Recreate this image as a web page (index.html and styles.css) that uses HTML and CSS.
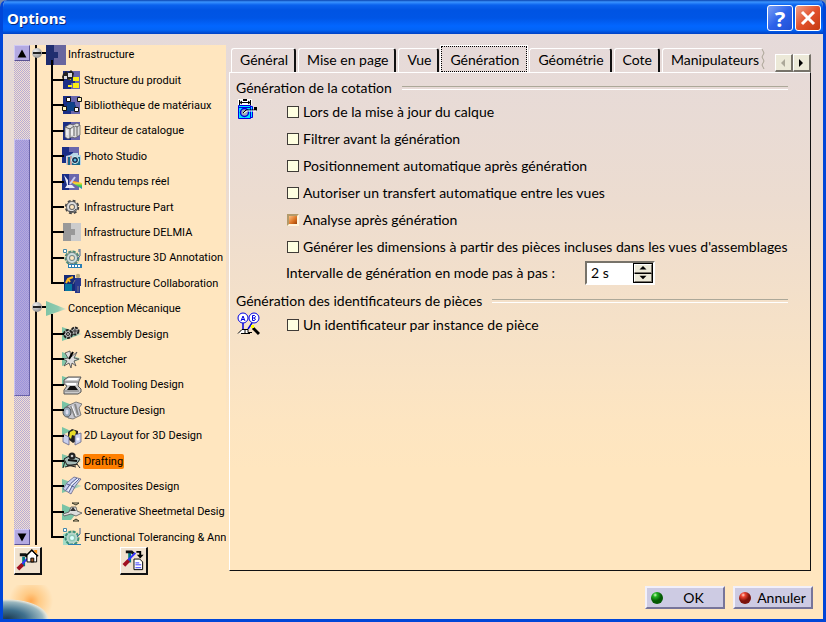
FILE: index.html
```html
<!DOCTYPE html>
<html lang="fr">
<head>
<meta charset="utf-8">
<title>Options</title>
<link rel="stylesheet" href="styles.css">
</head>
<body>
<svg class="defs" aria-hidden="true">
  <defs>
    <radialGradient id="ball-green" cx="35%" cy="25%"><stop offset="0" stop-color="#d6ffc4"/><stop offset=".35" stop-color="#22b322"/><stop offset="1" stop-color="#045a04"/></radialGradient>
    <radialGradient id="ball-red" cx="35%" cy="25%"><stop offset="0" stop-color="#ffd9cc"/><stop offset=".35" stop-color="#ee4433"/><stop offset="1" stop-color="#7c120c"/></radialGradient>
    <linearGradient id="cone" x1="0" x2="1"><stop offset="0" stop-color="#7fc4a6"/><stop offset=".6" stop-color="#8ecab0"/><stop offset="1" stop-color="#d9e2c4"/></linearGradient>
    <linearGradient id="spectrum" x1="0" y1="0" x2="0" y2="1"><stop offset="0" stop-color="#e33"/><stop offset=".35" stop-color="#fd3"/><stop offset=".65" stop-color="#3c5"/><stop offset="1" stop-color="#27e"/></linearGradient>
    <symbol id="base" viewBox="0 0 20 20"><path fill="#6a67ad" d="M1 1h17v18H1z"/><path fill="#1a2e86" d="M1 1h8v6h4v6H9v6H1z"/></symbol>
    <symbol id="wedge" viewBox="0 0 20 20"><path fill="url(#cone)" d="M0 3l20 7L0 17z"/></symbol>
    <symbol id="gear" viewBox="0 0 20 20"><circle cx="10" cy="10" r="6" fill="none" stroke="#444" stroke-width="2.500" stroke-dasharray="2.700 2"/><circle cx="10" cy="10" r="4" fill="none" stroke="#666" stroke-width="4"/><circle cx="10" cy="10" r="4" fill="none" stroke="#ddd" stroke-width="2"/><path d="M7 14a5 5 0 0 0 7-2" fill="none" stroke="#444"/></symbol>
  </defs>
</svg>

<main class="window">
  <header class="titlebar">
    <h1>Options</h1>
    <button class="caption help" type="button" aria-label="Aide">?</button>
    <button class="caption close" type="button" aria-label="Fermer"><svg viewBox="0 0 22 22"><path d="M5 5l12 12M17 5L5 17" stroke="#fff" stroke-width="3"/></svg></button>
  </header>

  <div class="content">
    <aside class="sidebar">
      <div class="treebox">
        <div class="scrollbar">
          <button class="arrow" type="button" aria-label="Monter"><svg viewBox="0 0 16 16"><path d="M8 4l5 9H3z"/></svg></button>
          <div class="track"><div class="thumb"></div></div>
          <button class="arrow" type="button" aria-label="Descendre"><svg viewBox="0 0 16 16"><path d="M8 13L3 4h10z"/></svg></button>
        </div>
        <div class="viewport">
        <ul class="tree">
          <li class="group">
            <a class="root" href="#"><i class="knob"></i><svg viewBox="0 0 20 20"><path fill="#68669f" d="M0 0h20v20H0z"/><path fill="#202d6f" d="M0 0h8v7h4v6H8v7H0z"/></svg><span>Infrastructure</span></a>
            <ul class="children">
              <li><a href="#"><svg viewBox="0 0 20 20"><use href="#base"/><path fill="#f8ee14" d="M11 7h6v4h-6zM11 13h6v5h-6zM6 9h3v1H6zM6 15h4v2H6z"/><path fill="#222" d="M1 4l3-3 2 2 3-3 3 3-1 5-4 2-3-1-3 1-1-3z"/><path fill="#ddd" d="M2 6h3v3H2zM6 3h4v4H6z"/></svg><span>Structure du produit</span></a></li>
              <li><a href="#"><svg viewBox="0 0 20 20"><use href="#base"/><path fill="#0d4388" d="M5 8l6-1 3 4-2 5H5z"/><g stroke="#111" fill="#fff"><path d="M4.500 2.500h4v4h-4z"/><path fill="#fff6bd" d="M15.500 2.500h4v4h-4z"/><path fill="#fff6bd" d="M.5 11.500h4v4h-4z"/><path d="M12.500 12.500h4v4h-4z"/></g></svg><span>Bibliothèque de matériaux</span></a></li>
              <li><a href="#"><svg viewBox="0 0 20 20"><use href="#base"/><path fill="#ddd" stroke="#555" stroke-width=".7" d="M3 6l5-3 3 1 4-2 3 2v10l-5 3-3-1-4 2-3-2z"/><path d="M8 7v10M3 6l5 2 4-3M12 5v10M13 5l2 1 3-2M15 6v9" stroke="#666" fill="none"/><path d="M5 9v5M10 8v6" stroke="#fff"/></svg><span>Editeur de catalogue</span></a></li>
              <li><a href="#"><svg viewBox="0 0 20 20"><path fill="#6a67ad" d="M0 1h17v15H0z"/><path fill="#1a2e86" d="M0 1h7v5h4v6H7v5H0z"/><path fill="#b9d6e6" d="M4 10l4-1 3-2h5v2h3v10H4z"/><path fill="#17688a" d="M6 11h12v8H6z"/><path fill="#c99" d="M5 11h1v8H5zM8 10h2v9H8z"/><circle cx="13" cy="14" r="3.500" fill="#124" stroke="#dff"/><circle cx="13" cy="14" r="1.500" fill="#58b9dd"/></svg><span>Photo Studio</span></a></li>
              <li><a href="#"><svg viewBox="0 0 20 20"><path fill="#6a67ad" d="M0 2h17v16H0z"/><path fill="#1a2e86" d="M0 2h7v16H0z"/><path fill="url(#spectrum)" d="M8 8l12 3v6L9 10z"/><path fill="#e8eafa" d="M2 3l4 5v5h4l3 3H3l2-3z"/><path d="M8 12l5-7" stroke="#cce" stroke-width="2"/></svg><span>Rendu temps réel</span></a></li>
              <li><a href="#"><svg viewBox="0 0 20 20"><use href="#gear"/></svg><span>Infrastructure Part</span></a></li>
              <li><a href="#"><svg viewBox="0 0 20 20"><path fill="#ccc" d="M1 1h18v18H1z"/><path fill="#999" d="M1 1h8v6h4v6H9v6H1z"/></svg><span>Infrastructure DELMIA</span></a></li>
              <li><a href="#"><svg viewBox="0 0 20 20"><circle cx="10" cy="10" r="6" fill="none" stroke="#4d8c78" stroke-width="3" stroke-dasharray="3 1"/><circle cx="10" cy="10" r="4" fill="none" stroke="#788" stroke-width="4"/><circle cx="10" cy="10" r="4" fill="none" stroke="#cdd" stroke-width="2"/><path d="M1.500 1.500h3v3h-3z" fill="#fff" stroke="#48a"/><path d="M18 1v7l-3 3M17 1v3" stroke="#469" fill="none"/><path fill="#2b7fb4" d="M6 16h14v4H6z"/><path d="M7 18h12" stroke="#fff" stroke-width="2" stroke-dasharray="2 1"/></svg><span>Infrastructure 3D Annotation</span></a></li>
              <li><a href="#"><svg viewBox="0 0 20 20"><path fill="#152b78" d="M2 2h11v16H2z"/><path fill="#0878a0" d="M3 11h7v7H3z"/><path d="M4 10l2-4 5-2M6 6l2 3" stroke="#fb2" stroke-width="2" fill="none"/><circle cx="16" cy="3" r="2.200" fill="#b8a87a"/><path fill="#29398e" d="M13 5h6v8h-1v7h-5z"/><path d="M16 13v6M13 7l-2 4" stroke="#778"/></svg><span>Infrastructure Collaboration</span></a></li>
            </ul>
          </li>
          <li class="group">
            <a class="root" href="#"><i class="knob"></i><svg viewBox="0 0 20 20"><path fill="url(#cone)" d="M0 2l20 8L0 17z"/></svg><span>Conception Mécanique</span></a>
            <ul class="children">
              <li><a href="#"><svg viewBox="0 0 20 20"><use href="#wedge"/><g fill="#bbb" stroke="#222" stroke-width="2"><circle cx="6" cy="10" r="4" stroke-dasharray="3 1"/><circle cx="13" cy="7" r="3.500" stroke-dasharray="3 1"/><circle cx="6" cy="10" r="1.500" stroke-width="1"/><circle cx="13" cy="7" r="1.200" stroke-width="1"/></g></svg><span>Assembly Design</span></a></li>
              <li><a href="#"><svg viewBox="0 0 20 20"><use href="#wedge"/><path d="M8 2l1 6 6-5-3 6 5 1-5 2 2 5-4-3-1 5-2-5-5 3 3-5-4-2 5-1-3-5z" fill="#ddd" stroke="#444" stroke-width=".8"/><path d="M7 10l4-7" stroke="#000" stroke-width="2"/></svg><span>Sketcher</span></a></li>
              <li><a href="#"><svg viewBox="0 0 20 20"><path fill="#79c4a6" d="M0 1l12 4-12 5z"/><path fill="#ccc" stroke="#555" d="M2 5l4-3h13l-2 4-1 5 3 3v3l-3 2H2v-4l3-4-3-2z"/><path fill="#fff" d="M4 5l3-2h10l-2 2zM4 8h10v2H5z"/><path fill="#111" d="M5 15l3-4h5l3 4z"/><path d="M2 7h14M3 16h14" stroke="#777"/></svg><span>Mold Tooling Design</span></a></li>
              <li><a href="#"><svg viewBox="0 0 20 20"><path fill="#79c4a6" d="M0 1l10 4-10 5z"/><path fill="#c7c7cf" stroke="#666" stroke-width=".8" d="M5 6l9-4 6 2-3 4 2 7-8 4-5-1z"/><path d="M9 6l4 11M13 4l3 11" stroke="#888" stroke-width="2"/><path d="M10 6l4 10" stroke="#fff"/><ellipse cx="5" cy="12" rx="4" ry="5" fill="#9ab" stroke="#555"/><ellipse cx="5" cy="12" rx="1.500" ry="2.500" fill="#dde"/></svg><span>Structure Design</span></a></li>
              <li><a href="#"><svg viewBox="0 0 20 20"><path fill="#79c4a6" d="M0 1l9 4-9 4z"/><path fill="#222" d="M6 6l4-3 6 2v9l-5 3-5-4z"/><path fill="#e7dc28" d="M8 6l4-2 2 2-1 4-3-1-1 4-2-2z"/><path fill="#c9d0ee" stroke="#668" stroke-width=".8" d="M1 8l6 3v8l-6-3zM13 9l6-2v9l-6 3z"/><circle cx="16" cy="13" r="1.500" fill="#fff"/></svg><span>2D Layout for 3D Design</span></a></li>
              <li><a href="#" class="selected"><svg viewBox="0 0 20 20"><use href="#wedge"/><path fill="#a6bbb7" stroke="#222" d="M2 8l7-4 9 4-4 6H5z"/><path d="M3 10L1 17M15 13l3 4M5 14l9 2M3 16l12-3" stroke="#222"/><circle cx="10" cy="5" r="3.500" fill="#222"/><circle cx="10" cy="5" r="1.300" fill="#ccc"/><path d="M6 9l9 1" stroke="#111" stroke-width="2"/></svg><span>Drafting</span></a></li>
              <li><a href="#"><svg viewBox="0 0 20 20"><use href="#wedge"/><path fill="#c9cff0" stroke="#668" stroke-width=".8" d="M1 13Q4 6 12 1l7 2Q13 9 9 18z"/><path d="M4 14Q8 7 15 2M7 16Q9 9 17 3M5 8l7 3" stroke="#55608f" fill="none"/><path d="M6 15Q8 8 16 3" stroke="#fff" fill="none"/></svg><span>Composites Design</span></a></li>
              <li><a href="#"><svg viewBox="0 0 20 20"><path fill="#79c4a6" d="M0 2l16 7-7 9H0z"/><path fill="#ddd" stroke="#555" stroke-width=".8" d="M1 12l6-2 2-5h5l1 4 5 2-6 3-5-2-7 2z"/><path fill="#333" d="M8 9l3-4 3 4z"/><path fill="none" stroke="#332" d="M10 1h7l-3 2zM11 19l3-2 3 2z"/></svg><span>Generative Sheetmetal Desig</span></a></li>
              <li><a href="#"><svg viewBox="0 0 20 20"><path fill="#a5dcc8" d="M1 7l8-3v15H1z"/><circle cx="10" cy="11" r="6" fill="none" stroke="#3e927b" stroke-width="3" stroke-dasharray="3 1"/><circle cx="10" cy="11" r="4.500" fill="#8dc8b5" stroke="#b6d6cc" stroke-width="2"/><circle cx="10" cy="11" r="2" fill="#dff"/><path d="M1.500 1.500h3v3h-3z" fill="#fff" stroke="#48a"/><path d="M18 1v6l-3 3" stroke="#469" fill="none"/><path fill="#2b7fb4" d="M6 17h13v2H6z"/></svg><span>Functional Tolerancing &amp; Ann</span></a></li>
            </ul>
          </li>
        </ul>
        </div>
      </div>
      <div class="tools">
        <button type="button" aria-label="Valeurs par défaut"><svg viewBox="0 0 26 26"><path d="M9 9v10" stroke="#078" stroke-width="3"/><path d="M5 7h6l2 2" stroke="#111" stroke-width="3" fill="none"/><path d="M7 17l8-8" stroke="#33f" stroke-width="2"/><path d="M3 22l5-5" stroke="#a01020" stroke-width="4"/><path fill="#fff" stroke="#000" d="M12.500 14.500v-7l5-5 5 5v7z"/><path d="M11 8.500l6.500-6.500L24 8.500" stroke="#000" fill="none" stroke-width="1.500"/><path fill="#f7941d" d="M20 2h3v4l-3-2z"/><path fill="#a55a26" stroke="#000" d="M16.500 10.500h3v4h-3z"/></svg></button>
        <button type="button" aria-label="Lister les paramètres"><svg viewBox="0 0 26 26"><path d="M9 5v10" stroke="#078" stroke-width="3"/><path d="M5 4h6l2 2" stroke="#111" stroke-width="3" fill="none"/><path d="M7 13l8-8" stroke="#33f" stroke-width="2"/><path d="M3 18l5-5" stroke="#a01020" stroke-width="4"/><path fill="#fff" stroke="#000" d="M13.500 11.500h6l3 3v8h-9z"/><path d="M15 15.500h4M15 17.500h6M15 20.500h6" stroke="#33f"/><path d="M16 4h4v4" stroke="#000" stroke-width="2" fill="none"/><path d="M16.500 7h7L20 11z"/></svg></button>
      </div>
    </aside>

    <section class="pane">
      <nav class="tabs">
        <button type="button">Général</button>
        <button type="button">Mise en page</button>
        <button type="button">Vue</button>
        <button type="button" class="active">Génération</button>
        <button type="button">Géométrie</button>
        <button type="button">Cote</button>
        <button type="button" class="cut">Manipulateurs<svg viewBox="0 0 4 22"><path d="M1 0l2 4-2 4 2 4-2 4 2 4" stroke="#a9a394" fill="none"/></svg></button>
        <span class="pager">
          <button type="button" disabled aria-label="Onglets précédents"><svg viewBox="0 0 14 14"><path fill="#aca899" d="M9 3v8L5 7z"/></svg></button>
          <button type="button" aria-label="Onglets suivants"><svg viewBox="0 0 14 14"><path d="M5 3v8l4-4z"/></svg></button>
        </span>
      </nav>
      <div class="panel">
        <section>
          <h2>Génération de la cotation</h2>
          <div class="body">
            <svg class="pic" viewBox="0 0 24 24"><path fill="#fff" d="M2 0h14v6H2z"/><path d="M3.500 1v5M14.500 1v5M4 3.500h10M6 2l-2 1.500L6 5M12 2l2 1.500L12 5" stroke="#000" fill="none"/><path stroke="#000" stroke-width="2" d="M7 1h4"/><path fill="#00e5ff" stroke="#0000e0" d="M2.500 6.500h12v13h-12zM2.500 8.500h12M14.500 7.500h2v11h-2"/><circle cx="8.500" cy="13.500" r="4" fill="#9cb0b8" stroke="#0000e0" stroke-width="1.500"/><path d="M7 14l3-3h11" stroke="#000" fill="none"/><path d="M8 14l3-2h9" stroke="#fff" fill="none"/><path d="M18 8h3v3h-3z"/></svg>
            <div class="options">
              <label><input type="checkbox">Lors de la mise à jour du calque</label>
              <label><input type="checkbox">Filtrer avant la génération</label>
              <label><input type="checkbox">Positionnement automatique après génération</label>
              <label><input type="checkbox">Autoriser un transfert automatique entre les vues</label>
              <label><input type="checkbox" checked>Analyse après génération</label>
              <label><input type="checkbox">Générer les dimensions à partir des pièces incluses dans les vues d'assemblages</label>
              <div class="interval">
                <label for="delay">Intervalle de génération en mode pas à pas :</label>
                <span class="spin">
                  <input id="delay" type="text" value="2 s">
                  <span class="steps">
                    <button type="button" aria-label="Augmenter"><svg viewBox="0 0 16 8"><path d="M8 1l4 4H4z"/></svg></button>
                    <button type="button" aria-label="Diminuer"><svg viewBox="0 0 16 8"><path d="M8 6L4 2h8z"/></svg></button>
                  </span>
                </span>
              </div>
            </div>
          </div>
        </section>
        <section>
          <h2>Génération des identificateurs de pièces</h2>
          <div class="body">
            <svg class="pic" viewBox="0 0 24 24"><g fill="#fff" stroke="#0000e0"><circle cx="7" cy="6" r="5"/><circle cx="18" cy="6" r="5"/></g><path d="M7 11v6M16 11l-4 6" stroke="#0000e0" stroke-width="1.500"/><path d="M5 9l2-5 2 5M6 7.500h2M16.500 8.500v-5h2l1 1-1 1.500h-2M18 6l1.500 1-1 1.500h-2" stroke="#0000e0" fill="none"/><path fill="#fff" stroke="#000" d="M2 21.500l4-4h6v3h4M5 21.500h9M9 17.500v4"/><path d="M17 16l6 6" stroke="#000" stroke-width="3"/><path fill="#ff0" d="M15 13h3v3h-3z"/></svg>
            <div class="options">
              <label><input type="checkbox">Un identificateur par instance de pièce</label>
            </div>
          </div>
        </section>
      </div>
    </section>
  </div>

  <footer class="actions">
    <span class="planet"></span>
    <button type="button"><svg viewBox="0 0 14 14"><circle cx="7" cy="7" r="6" fill="url(#ball-green)"/></svg><span>OK</span></button>
    <button type="button"><svg viewBox="0 0 14 14"><circle cx="7" cy="7" r="6" fill="url(#ball-red)"/></svg><span>Annuler</span></button>
  </footer>
</main>
</body>
</html>
```

FILE: styles.css
```css
* { box-sizing: border-box; }

body {
  margin: 0;
  background: #7b8ba8;
  color: #000;
  font: 14px/18px Lato, "Noto Sans", sans-serif;
}

button, input { font: inherit; color: inherit; margin: 0; padding: 0; }
ul { list-style: none; margin: 0; padding: 0; }
h1, h2 { margin: 0; }
a { color: inherit; text-decoration: none; }
svg { display: block; }
.defs { position: absolute; width: 0; height: 0; }

.window {
  height: 100vh;
  min-height: 500px;
  display: flex;
  flex-direction: column;
  border: solid #0046d8;
  border-width: 0 3px 3px;
  border-radius: 7px 7px 0 0;
  overflow: hidden;
  background: linear-gradient(#e5dada 34px, #ecdcd0 200px, #fde5c1 420px, #ffe6bf 470px);
}

/* Title bar */
.titlebar {
  flex: none;
  height: 34px;
  margin: 0 -3px;
  padding: 4px 5px 2px 7px;
  display: flex;
  align-items: center;
  gap: 2px;
  background: linear-gradient(#0a44b0 0, #3a94ff 2px, #0a62ee 5px, #0054e3 10px, #0055e5 18px, #0266ff 26px, #0264f6 30px, #0040c4 34px);
}
.titlebar h1 {
  flex: 1;
  color: #fff;
  font: bold 15px/20px "Noto Sans", sans-serif;
  text-shadow: 1px 1px #0a2a80;
}
.caption {
  width: 26px;
  height: 26px;
  border: 1px solid #fff;
  border-radius: 3px;
  color: #fff;
  font: bold 22px/22px "Noto Sans", sans-serif;
}
.caption svg { width: 22px; height: 22px; margin: auto; }
.help { background: linear-gradient(135deg, #7ba0f4, #2d62ea 50%, #2050d4); }
.close { background: linear-gradient(135deg, #f0a088, #e2512c 50%, #c43a10); }

/* Main area */
.content {
  flex: 1;
  min-height: 0;
  display: flex;
  gap: 3px;
  padding: 11px 12px 0 11px;
}
.sidebar {
  width: 212px;
  flex: none;
  display: flex;
  flex-direction: column;
  gap: 2px;
}
.treebox { flex: 1; min-height: 0; display: flex; }
.scrollbar { width: 16px; display: flex; flex-direction: column; }
.arrow {
  height: 16px;
  border: 1px solid;
  border-color: #cfc8f4 #5a5292 #5a5292 #cfc8f4;
  background: #b3a9e2;
}
.arrow svg { width: 14px; height: 14px; }
.track {
  flex: 1;
  padding-top: 78px;
  background: conic-gradient(#b5abd6 25%, #f3e0d0 0 50%, #b5abd6 0 75%, #f3e0d0 0) 0 0 / 2px 2px;
}
.thumb {
  height: 66%;
  border: 1px solid;
  border-color: #c8c2ee #6a62a8 #6a62a8 #c8c2ee;
  background: conic-gradient(#9a94dc 25%, #b8a9da 0 50%, #9a94dc 0 75%, #b8a9da 0) 0 0 / 2px 2px;
}

/* Tree: the list is slightly taller than its viewport, as if scrolled */
.viewport {
  flex: 1;
  min-width: 0;
  overflow: hidden;
  display: flex;
  background: #ffe6bf;
}
.tree {
  flex: 1;
  min-width: 0;
  margin: -3px 0 -5px;
  display: grid;
  grid-template-rows: 1fr 1fr;
  background: linear-gradient(#0f0b08, #0f0b08) 5px 0 / 2px 100% no-repeat;
  font: 11px/14px Roboto, "Noto Sans", sans-serif;
  white-space: nowrap;
}
.group { display: grid; grid-template-rows: 1fr 9fr; min-height: 0; }
.children { display: grid; grid-auto-rows: 1fr; min-height: 0; }
.children li { position: relative; padding-left: 32px; min-height: 0; }
.tree a { display: flex; align-items: center; gap: 1px; height: 100%; }
.tree a svg { width: 20px; height: 20px; flex: none; }
.tree a span { padding: 1px 1px 0; border-radius: 2px; }
.tree .selected span { background: #ff7f00; }
.root { position: relative; padding-left: 2px; }
.root::before {
  content: "";
  position: absolute;
  left: 10px;
  top: calc(50% - 3px);
  width: 6px;
  height: 2px;
  background: #000;
}
.knob {
  position: relative;
  width: 10px;
  height: 10px;
  margin: 0 3px 4px 0;
  border-radius: 50%;
  background: linear-gradient(#222, #222) 50% 50% / 8px 2px no-repeat, radial-gradient(circle at 35% 30%, #eee, #777);
}
.children li::before {
  content: "";
  position: absolute;
  left: 21px;
  top: -7px;
  width: 11px;
  height: calc(50% + 6px);
  border: solid #000;
  border-width: 0 0 2px 2px;
}
.children li::after {
  content: "";
  position: absolute;
  left: 21px;
  top: 50%;
  width: 2px;
  height: 50%;
  background: #000;
}
.children li:last-child::after { display: none; }

.tools { display: flex; gap: 78px; }
.tools button {
  width: 28px;
  height: 28px;
  border: solid;
  border-width: 1px 2px 2px 1px;
  border-color: #fff #111 #111 #fff;
  background: #f0e2cf;
}
.tools svg { width: 25px; height: 25px; }

/* Tabbed pane */
.pane {
  flex: 1;
  min-width: 0;
  display: flex;
  flex-direction: column;
  margin-bottom: 4px;
}
.tabs {
  display: flex;
  align-items: flex-end;
  gap: 2px;
  height: 27px;
  padding-left: 2px;
}
.tabs > button {
  height: 24px;
  padding: 0 6px 1px 8px;
  border: solid;
  border-width: 1px 2px 0 1px;
  border-color: #fff #111 #fff #fff;
  border-radius: 3px 3px 0 0;
  background: none;
  white-space: nowrap;
}
.tabs > .active {
  height: 26px;
  padding: 1px 7px 0 8px;
  border: 1px dotted #000;
  border-radius: 0;
  outline: 1px solid #fff;
}
.tabs > .cut { position: relative; border-right: 0; padding-right: 4px; }
.cut svg { position: absolute; right: -2px; top: 0; width: 4px; height: 22px; }
.pager { flex: none; margin-left: auto; display: flex; }
.pager button {
  width: 18px;
  height: 18px;
  border: solid;
  border-width: 1px 2px 2px 1px;
  border-color: #fff #77736a #77736a #fff;
  background: #ece9d8;
}
.pager svg { width: 14px; height: 14px; }

.panel {
  flex: 1;
  border: 1px solid;
  border-color: #fff #111 #111 #fff;
  padding: 5px 22px 0 6px;
}
.panel section + section { margin-top: 5px; }
.panel h2 {
  display: flex;
  align-items: center;
  gap: 10px;
  font: inherit;
  height: 20px;
  white-space: nowrap;
}
.panel h2::after {
  content: "";
  flex: 1;
  height: 2px;
  border-top: 1px solid #aca899;
  border-bottom: 1px solid #fff;
}
.body { display: flex; gap: 27px; }
.pic { width: 24px; height: 24px; flex: none; margin-top: 1px; }
.options > label {
  display: flex;
  align-items: center;
  gap: 4px;
  height: 27px;
  white-space: nowrap;
}
.options input[type="checkbox"] {
  appearance: none;
  width: 12px;
  height: 12px;
  border: 1px solid #403c38;
  background: #ffffe1;
}
.options input[type="checkbox"]:checked {
  border: 2px solid;
  border-color: #b39a6a #fff4dc #fff4dc #b39a6a;
  background: linear-gradient(135deg, #ffc080, #d87020 60%, #9c4208);
}
.interval { display: flex; align-items: center; gap: 30px; height: 26px; margin-left: -1px; }
.spin {
  display: flex;
  width: 70px;
  height: 24px;
  border: 2px solid;
  border-color: #77736a #fff #fff #77736a;
  background: #fff;
}
.spin input { flex: 1; min-width: 0; padding-left: 4px; border: 0; background: none; }
.steps { display: flex; flex-direction: column; width: 20px; border: 1px solid #000; }
.steps button {
  flex: 1;
  min-height: 0;
  border: 1px solid;
  border-color: #fff #77736a #77736a #fff;
  background: #ece9d8;
}
.steps button + button { border-top: 1px solid #000; }
.steps svg { width: 16px; height: 7px; }

/* Footer */
.actions {
  flex: none;
  position: relative;
  display: flex;
  justify-content: flex-end;
  gap: 8px;
  padding: 11px 10px 10px 0;
}
.actions button {
  display: flex;
  align-items: center;
  width: 80px;
  height: 23px;
  padding-left: 3px;
  border: 2px solid;
  border-color: #f2f0fa #77759a #77759a #f2f0fa;
  background: #cdcbe3;
}
.actions button svg { width: 14px; height: 14px; }
.actions button span { flex: 1; text-align: center; }
.planet {
  position: absolute;
  left: 0;
  bottom: 0;
  width: 52px;
  height: 34px;
  background:
    radial-gradient(ellipse 42px 20px at 4px 34px, #1c3a50 0, #3f6f8c 45%, #9cb8c0 85%, #e6e4d8 96%, transparent 100%),
    radial-gradient(circle at 28px 16px, #ffa850 0, #ffca85 8px, transparent 22px);
}
```
